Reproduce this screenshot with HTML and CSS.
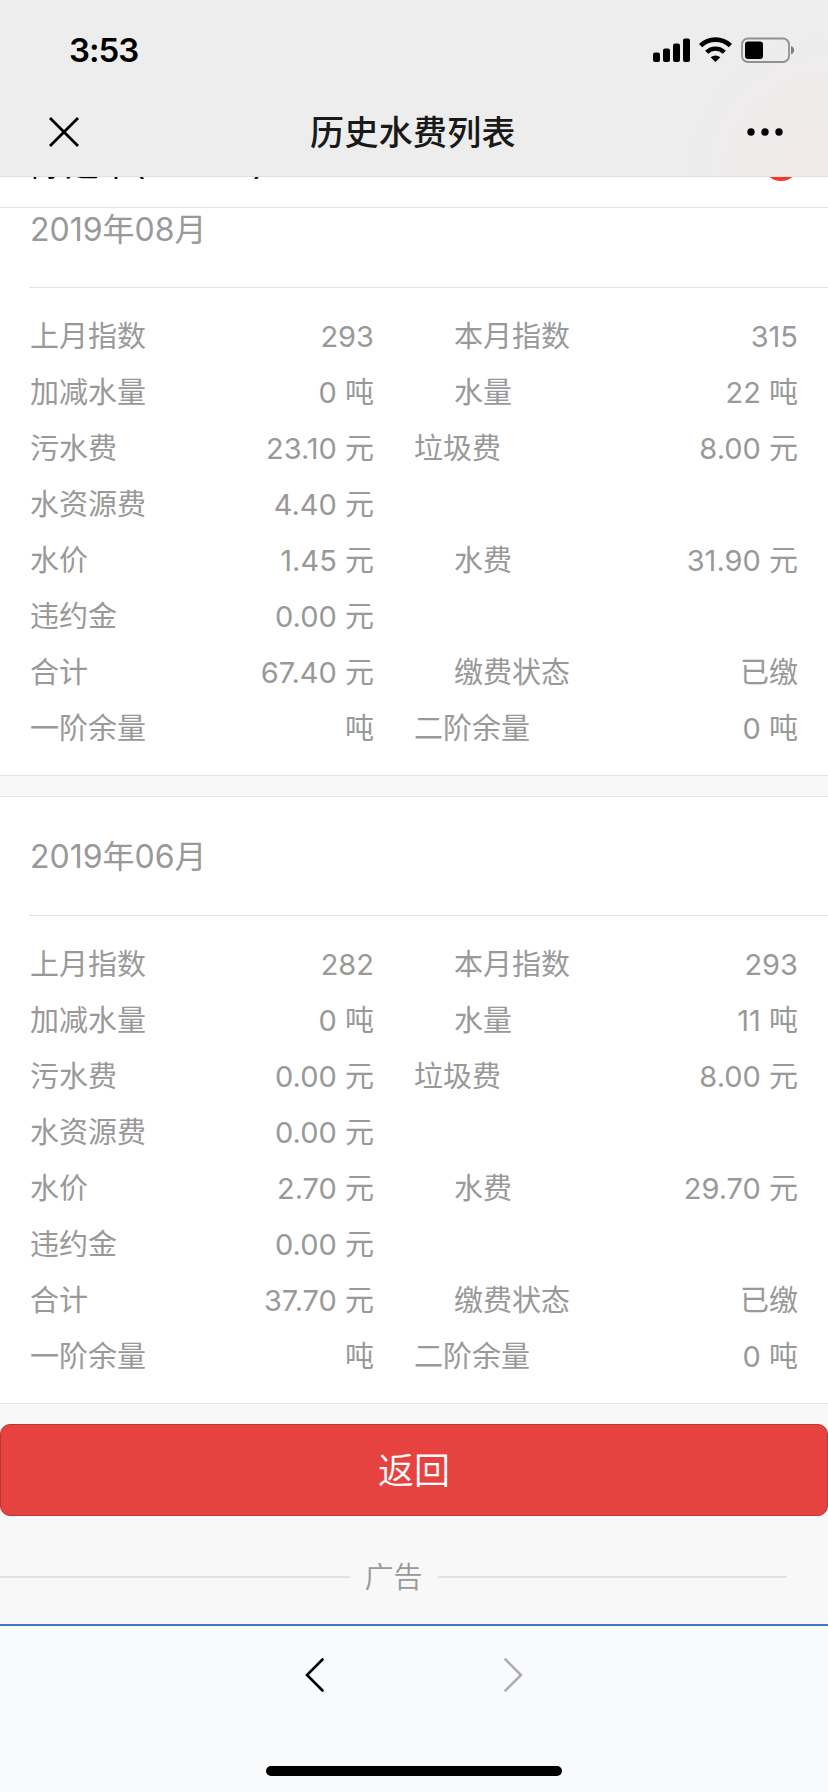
FILE: index.html
```html
<!DOCTYPE html>
<html lang="zh-CN">
  <head>
    <meta charset="UTF-8" />
    <meta name="viewport" content="width=device-width, initial-scale=1.0" />
    <title>历史水费列表</title>
    <link rel="stylesheet" href="styles.css">
  </head>
  <body>
    <div class="page">
      <header class="header">
        <div class="status-bar">
          <span class="time">3:53</span>
          <svg class="status-icons" width="142" height="26" viewBox="0 0 142 26">
            <!-- signal -->
            <rect x="0" y="15.5" width="7" height="9.5" rx="2" />
            <rect x="10" y="11.5" width="7" height="13.5" rx="2" />
            <rect x="20" y="6.5" width="7" height="18.5" rx="2" />
            <rect x="30" y="1.5" width="7" height="23.5" rx="2" />
            <!-- wifi -->
            <g fill="none" stroke="#000">
              <path d="M47.6 8.6A21.5 21.5 0 0 1 77.4 8.6" stroke-width="4.6" />
              <path d="M53.7 15.2A12.5 12.5 0 0 1 71.3 15.2" stroke-width="4.4" />
            </g>
            <path d="M57.6 20.2Q62.5 16.6 67.4 20.2L62.5 25Z" />
            <!-- battery -->
            <rect x="89" y="1.5" width="47" height="23.5" rx="6" fill="none" stroke="#919191" stroke-width="1.8" />
            <rect x="92" y="4.5" width="18" height="17.5" rx="3" />
            <path d="M138 9Q141.2 10.5 141.2 13.2T138 17.5Z" fill="#808080" />
          </svg>
        </div>
        <div class="nav-bar">
          <svg class="nav-icon" width="30" height="30" viewBox="0 0 30 30">
            <path d="M1 1L29 29M29 1L1 29" fill="none" stroke="#000" stroke-width="2.8" />
          </svg>
          <h1>历史水费列表</h1>
          <svg class="nav-icon" width="36" height="8" viewBox="0 0 36 8">
            <circle cx="4" cy="4" r="3.7" />
            <circle cx="18" cy="4" r="3.7" />
            <circle cx="32" cy="4" r="3.7" />
          </svg>
        </div>
      </header>

      <!-- account row, mostly scrolled under the header -->
      <div class="account">
        <span class="account-name">陈建平(00000)</span>
        <span class="account-dot"></span>
      </div>

      <section class="bill first">
        <h2>2019年08月</h2>
        <div class="bill-body">
          <div class="row"><span>上月指数</span><b>293</b><span class="indent">本月指数</span><b>315</b></div>
          <div class="row"><span>加减水量</span><b>0 吨</b><span class="indent">水量</span><b>22 吨</b></div>
          <div class="row"><span>污水费</span><b>23.10 元</b><span>垃圾费</span><b>8.00 元</b></div>
          <div class="row"><span>水资源费</span><b>4.40 元</b></div>
          <div class="row"><span>水价</span><b>1.45 元</b><span class="indent">水费</span><b>31.90 元</b></div>
          <div class="row"><span>违约金</span><b>0.00 元</b></div>
          <div class="row"><span>合计</span><b>67.40 元</b><span class="indent">缴费状态</span><b>已缴</b></div>
          <div class="row"><span>一阶余量</span><b>吨</b><span>二阶余量</span><b>0 吨</b></div>
        </div>
      </section>

      <section class="bill">
        <h2>2019年06月</h2>
        <div class="bill-body">
          <div class="row"><span>上月指数</span><b>282</b><span class="indent">本月指数</span><b>293</b></div>
          <div class="row"><span>加减水量</span><b>0 吨</b><span class="indent">水量</span><b>11 吨</b></div>
          <div class="row"><span>污水费</span><b>0.00 元</b><span>垃圾费</span><b>8.00 元</b></div>
          <div class="row"><span>水资源费</span><b>0.00 元</b></div>
          <div class="row"><span>水价</span><b>2.70 元</b><span class="indent">水费</span><b>29.70 元</b></div>
          <div class="row"><span>违约金</span><b>0.00 元</b></div>
          <div class="row"><span>合计</span><b>37.70 元</b><span class="indent">缴费状态</span><b>已缴</b></div>
          <div class="row"><span>一阶余量</span><b>吨</b><span>二阶余量</span><b>0 吨</b></div>
        </div>
      </section>

      <button class="back-btn" type="button">返回</button>

      <div class="ad-title"><span>广告</span></div>

      <footer class="toolbar">
        <div class="arrows">
          <svg width="20" height="36" viewBox="0 0 20 36">
            <path d="M17.5 2.5L2 18L17.5 33.5" fill="none" stroke="#000" stroke-width="2.6" stroke-linecap="round" />
          </svg>
          <svg width="20" height="36" viewBox="0 0 20 36">
            <path d="M2.5 2.5L18 18L2.5 33.5" fill="none" stroke="#adadae" stroke-width="2.6" stroke-linecap="round" />
          </svg>
        </div>
        <div class="home-bar"></div>
      </footer>
    </div>
  </body>
</html>
```
FILE: styles.css
```css
* {
  box-sizing: border-box;
}
body {
  margin: 0;
  font-family: Inter, "Noto Sans CJK SC", sans-serif;
  background-color: #f8f8f8;
}
.page {
  display: flex;
  flex-direction: column;
  width: 828px;
  height: 1792px;
  overflow: hidden;
}
.header {
  height: 177px;
  flex: none;
  border-bottom: 1px solid #dfe0e0;
  background: radial-gradient(circle at 100% 100%, #f1eae9 0, rgba(240, 235, 235, 0) 150px), #ededed;
}
.status-bar {
  display: flex;
  justify-content: space-between;
  align-items: center;
  height: 88px;
  padding: 11px 33px 0 69px;
}
.time {
  font-size: 33px;
  font-weight: 600;
  line-height: 40px;
  letter-spacing: -1px;
}
.nav-bar {
  display: flex;
  justify-content: space-between;
  align-items: center;
  height: 88px;
  padding: 0 45px 0 49px;
}
.nav-bar h1 {
  margin: 0;
  padding-top: 2px;
  font-size: 34px;
  font-weight: 500;
  line-height: 48px;
  letter-spacing: 0.3px;
  color: #191919;
}
.account {
  display: flex;
  justify-content: space-between;
  align-items: flex-end;
  flex: none;
  height: 31px;
  padding: 0 29px 26px 31px;
  overflow: hidden;
  background: #fff;
  border-bottom: 1px solid #e2e2e2;
}
.account-name {
  font-size: 34px;
  line-height: 40px;
  margin-bottom: -3px;
  color: #000;
}
.account-dot {
  width: 36px;
  height: 36px;
  border-radius: 50%;
  background: #f43530;
}
.bill {
  flex: none;
  margin-bottom: 20px;
  background: #fff;
  border-top: 1px solid #e2e2e2;
  border-bottom: 1px solid #e2e2e2;
}
.bill h2 {
  margin: 0 0 0 29px;
  padding: 37px 1px 36px;
  border-bottom: 1px solid #e2e2e2;
  font-size: 32px;
  font-weight: 380;
  line-height: 45px;
  color: #999;
}
.bill.first {
  border-top: none;
}
.bill.first h2 {
  height: 80px;
  padding-top: 0;
  padding-bottom: 0;
  line-height: 43px;
}
.bill-body {
  padding: 21px 30px 18px;
}
.row {
  display: grid;
  grid-template-columns: 150px 194px 230px 194px;
  height: 56px;
  align-items: center;
  font-size: 29px;
  font-weight: 380;
  line-height: 42px;
  color: #999;
  white-space: nowrap;
}
.row b {
  font-weight: 380;
  text-align: right;
}
.row b + span {
  padding-left: 40px;
}
.row b + .indent {
  padding-left: 80px;
}
.back-btn {
  flex: none;
  height: 92px;
  padding: 0 0 5px;
  border: 1px solid #bd3536;
  border-radius: 10px;
  background: #e64340;
  font-family: inherit;
  font-size: 36px;
  font-weight: 350;
  color: #fff;
}
.ad-title {
  display: flex;
  align-items: center;
  flex: none;
  height: 108px;
  padding: 14px 41px 0 0;
  font-size: 29px;
  font-weight: 350;
  color: #999;
}
.ad-title::before,
.ad-title::after {
  content: "";
  flex: 1;
  height: 2px;
  background: #e2e2e2;
}
.ad-title span {
  padding: 0 15px 4px;
}
.toolbar {
  display: flex;
  flex-direction: column;
  align-items: center;
  justify-content: space-between;
  flex: 1;
  padding: 31px 0 16px;
  border-top: 2px solid #3d76c2;
  background: #f9fafc;
}
.arrows {
  display: flex;
  gap: 178px;
}
.home-bar {
  width: 296px;
  height: 10px;
  border-radius: 5px;
  background: #000;
}
```
